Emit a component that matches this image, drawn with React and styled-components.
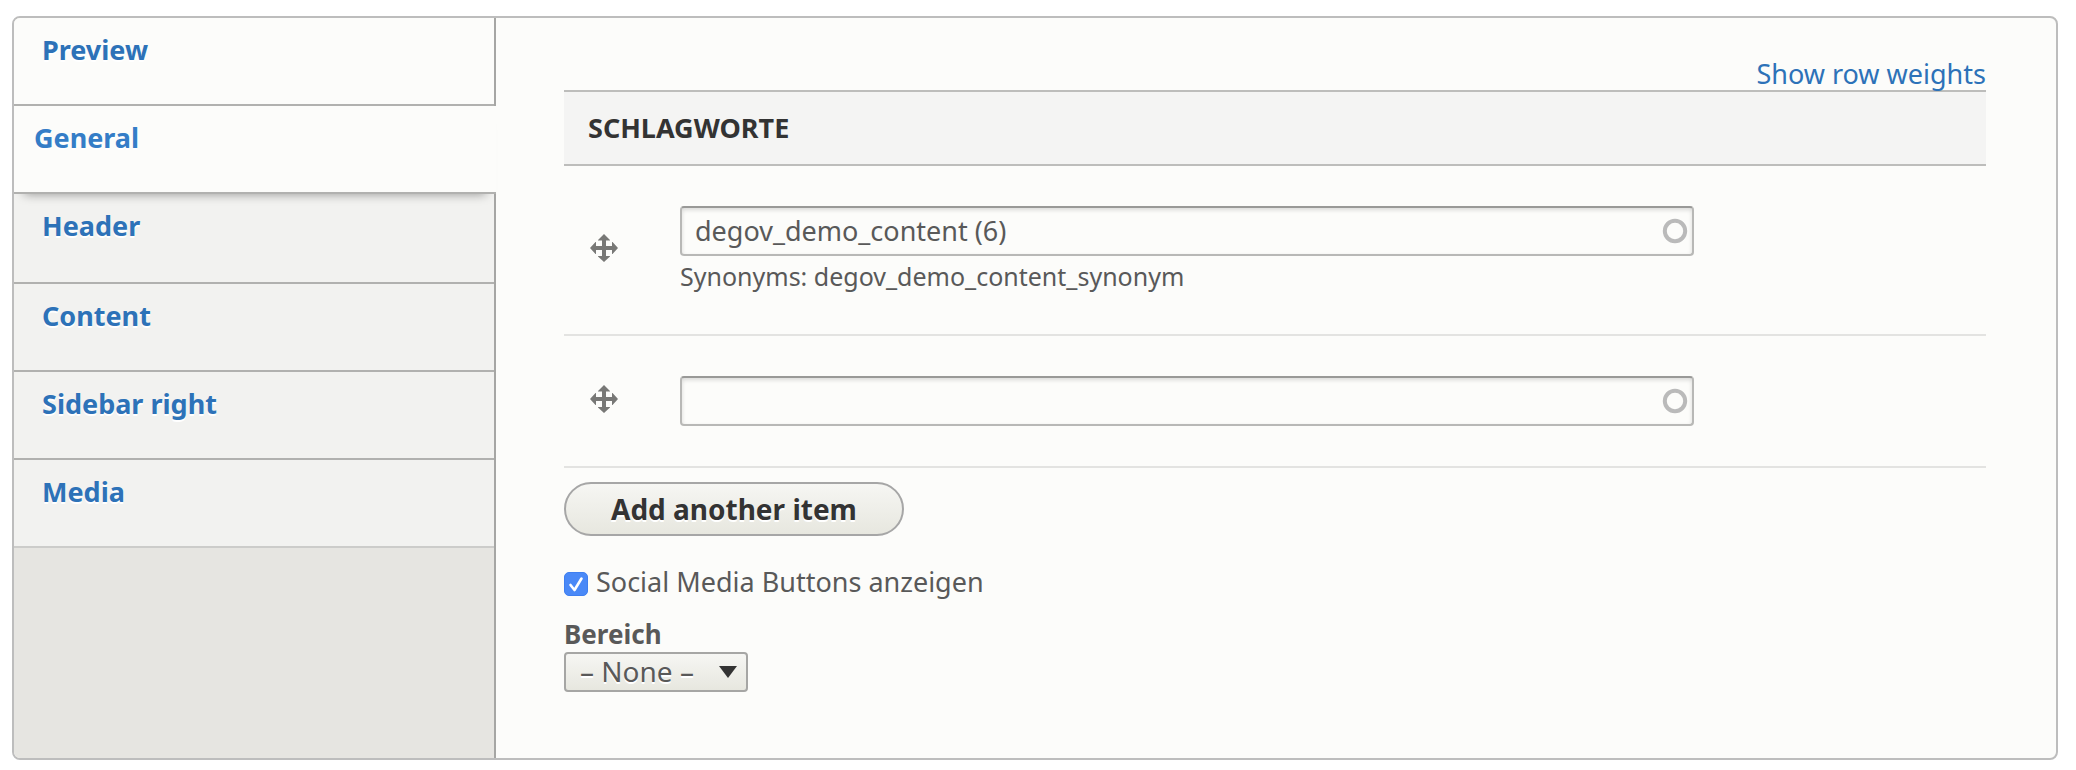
import React, { useState } from 'react';
import styled, { createGlobalStyle, css } from 'styled-components';

const GlobalStyle = createGlobalStyle`
  *, *::before, *::after { box-sizing: border-box; }
  body {
    margin: 0;
    background: #fff;
    color: #595959;
    font-family: 'Noto Sans', 'Open Sans', sans-serif;
    font-size: 27px;
    line-height: 32px;
  }
`;

const Panel = styled.main`
  display: flex;
  margin: 16px 18px 10px 12px;
  border: 2px solid #bdbdbd;
  border-radius: 8px;
  background: #fcfcfa;
  overflow: hidden;
`;

const Sidebar = styled.nav`
  flex: 0 0 482px;
  border-right: 2px solid #a6a6a4;
  background: #e6e5e1;
`;

const TabList = styled.ul`
  margin: 0;
  padding: 0;
  list-style: none;
`;

const Tab = styled.li`
  border-bottom: 2px solid #b1b1af;
  background: ${(p) => (p.$plain ? '#fcfcfa' : '#f2f2f0')};

  &:last-child { border-bottom-color: #ccccca; }

  ${(p) =>
    p.$selected &&
    css`
      position: relative;
      z-index: 1;
      margin-right: -2px;
      background: #fcfcfa;
      box-shadow: 0 10px 10px -10px rgba(0, 0, 0, 0.4);

      & + li { padding-bottom: 2px; }
    `}
`;

const TabLink = styled.a`
  display: block;
  min-height: 86px;
  padding: 16px 28px;
  padding-left: ${(p) => (p.$selected ? 20 : 28)}px;
  color: ${(p) => (p.$selected ? '#347dc7' : '#2d72b8')};
  font-weight: 700;
  text-decoration: none;
  text-shadow: 0 2px 0 #fff;
`;

const Pane = styled.form`
  flex: 1;
  min-width: 0;
  padding: 40px 70px 66px 68px;
`;

const TableTools = styled.div`
  display: flex;
  justify-content: flex-end;
`;

const WeightsLink = styled.a`
  color: #2d72b8;
  text-decoration: none;
`;

const FieldTable = styled.table`
  width: 100%;
  border-collapse: separate;
  border-spacing: 0;
`;

const HeadCell = styled.th`
  padding: 20px 24px;
  border: solid #bdbdbb;
  border-width: 2px 0;
  background: #f4f4f3;
  color: #333;
  font-weight: 700;
  text-align: left;
  text-transform: uppercase;
`;

const Cell = styled.td`
  padding: 40px 0;
  border-bottom: 2px solid #e3e3e1;
`;

const HandleCell = styled(Cell)`
  width: 116px;
  padding: 0 0 4px 26px;
`;

const DragHandle = styled.a`
  display: block;
  width: 28px;
  height: 28px;
  cursor: move;

  svg { display: block; }
`;

const InputWrap = styled.div`
  position: relative;
  width: 1014px;
  max-width: 100%;
`;

const TextInput = styled.input`
  display: block;
  width: 100%;
  height: 50px;
  padding: 0 50px 2px 13px;
  border: 2px solid #b8b8b6;
  border-top-color: #999997;
  border-radius: 4px;
  background: #fcfcfa;
  box-shadow: inset 0 2px 4px rgba(0, 0, 0, 0.14);
  color: #595959;
  font: inherit;
  outline: none;
`;

const Throbber = styled.svg`
  position: absolute;
  top: 12px;
  right: 6px;
  pointer-events: none;
`;

const Description = styled.div`
  margin-top: 2px;
  font-size: 25px;
  line-height: 36px;
`;

const AddButton = styled.button`
  display: block;
  height: 54px;
  margin-top: 14px;
  padding: 0 45px;
  border: 2px solid #a6a6a6;
  border-radius: 27px;
  background: linear-gradient(#f6f6f3, #e7e7df);
  color: #333;
  font-family: inherit;
  font-size: 28px;
  font-weight: 700;
  line-height: 50px;
  text-shadow: 0 2px 0 #fff;
`;

const CheckRow = styled.div`
  display: flex;
  align-items: flex-end;
  gap: 8px;
  margin-top: 32px;
  line-height: 28px;
`;

const CheckBox = styled.span`
  position: relative;
  width: 24px;
  height: 24px;

  svg {
    position: absolute;
    inset: 0;
    pointer-events: none;
  }
`;

const CheckInput = styled.input`
  appearance: none;
  display: block;
  width: 24px;
  height: 24px;
  margin: 0;
  border: 1px solid #b8b8b6;
  border-radius: 5px;
  background: #fff;

  &:checked {
    border-color: #3f7ff0;
    background: #4a89f7;
  }
`;

const SelectLabel = styled.label`
  display: block;
  margin-top: 20px;
  font-size: 26px;
  font-weight: 700;
  line-height: 36px;
`;

const SelectWrap = styled.div`
  position: relative;
  width: 184px;

  svg {
    position: absolute;
    top: 14px;
    right: 11px;
    pointer-events: none;
  }
`;

const Select = styled.select`
  appearance: none;
  display: block;
  width: 100%;
  height: 40px;
  padding: 0 36px 2px 14px;
  border: 2px solid #a6a6a4;
  border-radius: 4px;
  background: linear-gradient(#f6f6f3, #e7e7df);
  color: #595959;
  font-family: inherit;
  font-size: 28px;
  line-height: 34px;
  text-shadow: 0 2px 0 #fff;
`;

const TABS = [
  { label: 'Preview', plain: true },
  { label: 'General', selected: true },
  { label: 'Header' },
  { label: 'Content' },
  { label: 'Sidebar right' },
  { label: 'Media' },
];

function TagRow({ id, value, description }) {
  const [text, setText] = useState(value);
  return (
    <tr>
      <HandleCell>
        <DragHandle href="#" aria-label="Drag to re-order">
          <svg width="28" height="28" viewBox="0 0 28 28" fill="#787876">
            <path d="M14 0l6 6v0.500h-4V12h6V8h.5L28 14l-5.500 6H22v-4h-6v6h4v.5L14 28l-6-5.500V22h4v-6H6v4h-.5L0 14l5.500-6H6v4h6V6.500H8V6z" />
          </svg>
        </DragHandle>
      </HandleCell>
      <Cell>
        <InputWrap>
          <TextInput
            id={id}
            type="text"
            aria-label="Schlagworte"
            value={text}
            onChange={(e) => setText(e.target.value)}
          />
          <Throbber width="26" height="26" viewBox="0 0 26 26">
            <circle cx="13" cy="13" r="10.200" fill="none" stroke="#bababa" strokeWidth="4" />
          </Throbber>
        </InputWrap>
        {description && <Description>{description}</Description>}
      </Cell>
    </tr>
  );
}

export default function App() {
  const [social, setSocial] = useState(true);
  return (
    <>
      <GlobalStyle />
      <Panel>
        <Sidebar>
          <TabList>
            {TABS.map((t) => (
              <Tab key={t.label} $plain={t.plain} $selected={t.selected}>
                <TabLink href="#" $selected={t.selected}>
                  {t.label}
                </TabLink>
              </Tab>
            ))}
          </TabList>
        </Sidebar>
        <Pane>
          <TableTools>
            <WeightsLink href="#">Show row weights</WeightsLink>
          </TableTools>
          <FieldTable>
            <thead>
              <tr>
                <HeadCell colSpan={2}>Schlagworte</HeadCell>
              </tr>
            </thead>
            <tbody>
              <TagRow
                id="tag-0"
                value="degov_demo_content (6)"
                description="Synonyms: degov_demo_content_synonym"
              />
              <TagRow id="tag-1" value="" />
            </tbody>
          </FieldTable>
          <AddButton type="button">Add another item</AddButton>
          <CheckRow>
            <CheckBox>
              <CheckInput
                id="social"
                type="checkbox"
                checked={social}
                onChange={(e) => setSocial(e.target.checked)}
              />
              {social && (
                <svg width="24" height="24" viewBox="0 0 24 24" fill="none" stroke="#fff" strokeWidth="2.600" strokeLinecap="round" strokeLinejoin="round">
                  <path d="M6.500 13l4 5L17.500 6.500" />
                </svg>
              )}
            </CheckBox>
            <label htmlFor="social">Social Media Buttons anzeigen</label>
          </CheckRow>
          <SelectLabel htmlFor="area">Bereich</SelectLabel>
          <SelectWrap>
            <Select id="area" defaultValue="none">
              <option value="none">– None –</option>
            </Select>
            <svg width="18" height="12" viewBox="0 0 18 12" fill="#333">
              <path d="M0 0h18L9 12z" />
            </svg>
          </SelectWrap>
        </Pane>
      </Panel>
    </>
  );
}
